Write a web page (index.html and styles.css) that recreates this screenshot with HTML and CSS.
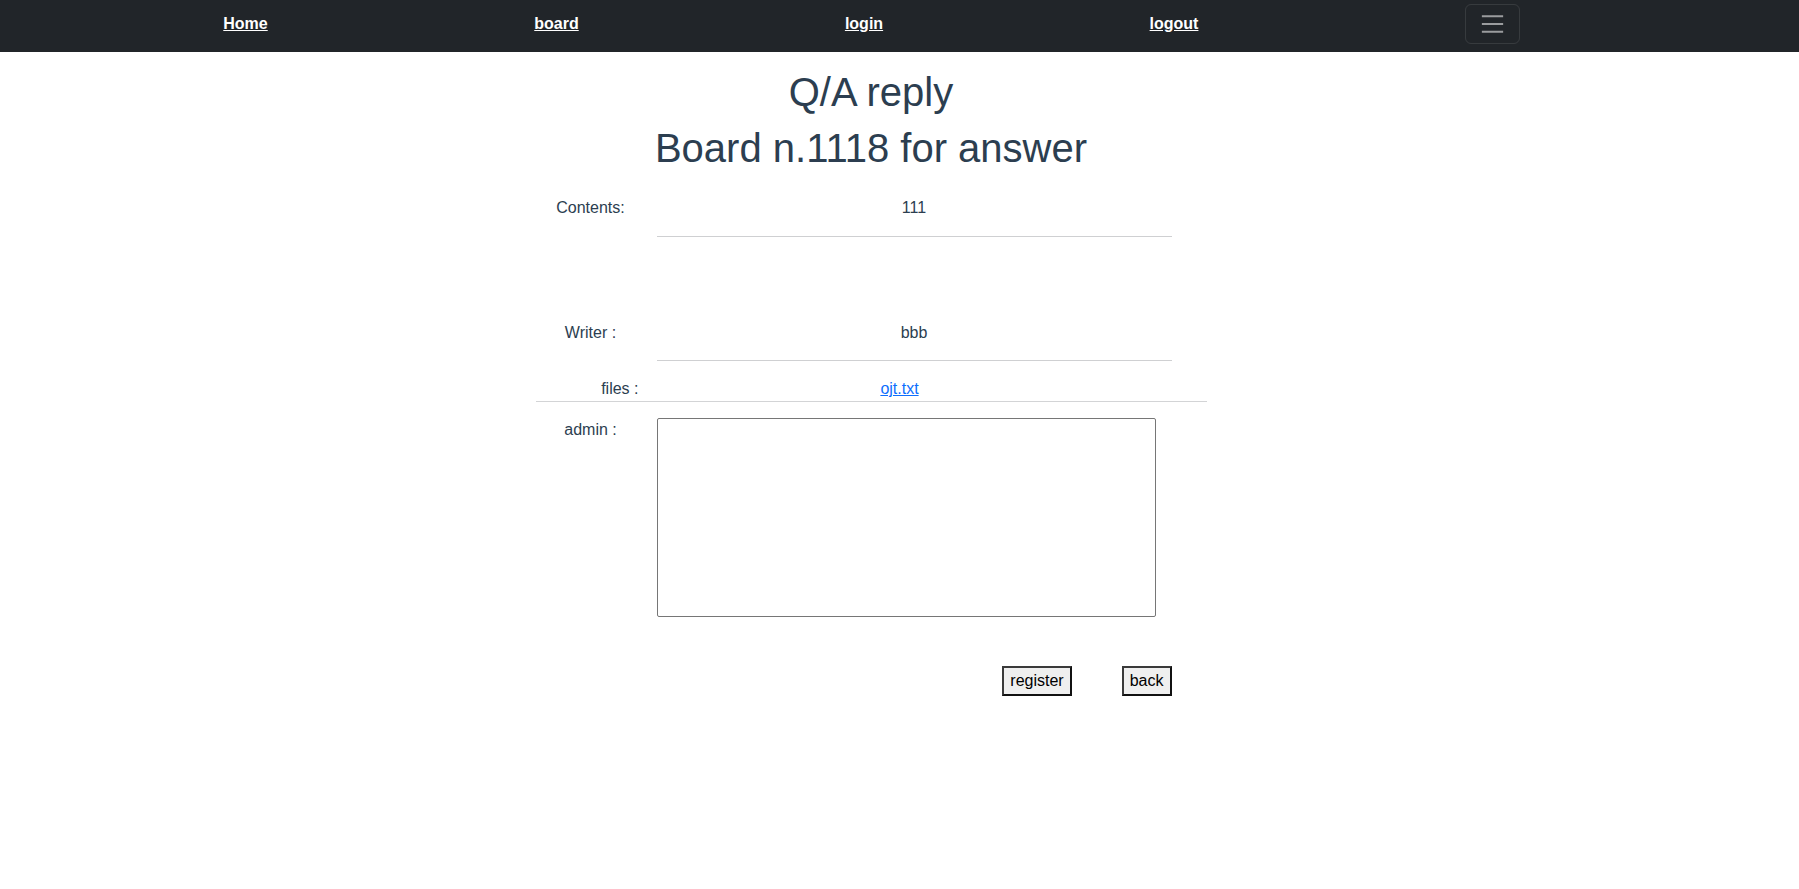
FILE: index.html
```html
<!DOCTYPE html>
<html lang="en">
<head>
<meta charset="utf-8">
<title>Q/A reply</title>
<link rel="stylesheet" href="styles.css">
</head>
<body>
<nav class="navbar">
  <ul class="nav-list">
    <li class="nav-item"><a href="#" class="nav-link">Home</a></li>
    <li class="nav-item"><a href="#" class="nav-link">board</a></li>
    <li class="nav-item"><a href="#" class="nav-link">login</a></li>
    <li class="nav-item"><a href="#" class="nav-link">logout</a></li>
    <li class="nav-item">
      <button class="toggler" type="button" aria-label="Toggle navigation">
        <svg width="30" height="30" viewBox="0 0 30 30" aria-hidden="true">
          <path d="M4 7h22M4 15h22M4 23h22" stroke="rgba(255,255,255,0.55)" stroke-width="2" stroke-linecap="butt" fill="none"/>
        </svg>
      </button>
    </li>
  </ul>
</nav>
<div class="app">
  <h1 class="title title-first">Q/A reply</h1>
  <h1 class="title">Board n.1118 for answer</h1>
  <section class="board">
    <div class="row row-contents">
      <div class="label">Contents:</div>
      <div class="value">
        <p class="text">111</p>
        <hr class="rule">
      </div>
    </div>
    <div class="row row-writer">
      <div class="label">Writer :</div>
      <div class="value">
        <p class="text">bbb</p>
        <hr class="rule">
      </div>
    </div>
    <div class="row row-files">
      <div class="label label-files">files :</div>
      <div class="value value-files"><a href="#" class="file-link">ojt.txt</a></div>
    </div>
    <div class="row row-admin">
      <div class="label label-admin">admin :</div>
      <div class="value value-admin"><textarea class="answer"></textarea></div>
    </div>
    <div class="actions">
      <button class="btn" type="button">register</button>
      <button class="btn" type="button">back</button>
    </div>
  </section>
</div>
</body>
</html>
```

FILE: styles.css
```css
* { box-sizing: border-box; }

html, body {
  margin: 0;
  padding: 0;
  background: #fff;
}

body {
  font-family: "Liberation Sans", Arial, Helvetica, sans-serif;
  font-size: 16px;
  line-height: 1.5;
  color: #2c3e50;
}

.navbar {
  background: #212529;
  height: 52px;
  padding: 4px 0 8px;
}

.nav-list {
  list-style: none;
  margin: 0;
  padding: 0 0 0 91px;
  height: 40px;
  display: grid;
  grid-template-columns: 309px 313px 302px 318px 318px;
  align-items: center;
  justify-items: center;
}

.nav-link {
  color: #fff;
  font-weight: 700;
  text-decoration: underline;
  font-size: 16px;
  line-height: 20px;
}

.toggler {
  width: 55px;
  height: 40px;
  padding: 4px 12px;
  background: transparent;
  border: 1px solid rgba(255, 255, 255, 0.1);
  border-radius: 6px;
  display: flex;
  align-items: center;
  justify-content: center;
}

.toggler svg { display: block; }

.app {
  padding-right: 57px;
  text-align: center;
}

.title {
  font-size: 40px;
  font-weight: 400;
  line-height: 1.2;
  margin: 0 0 8px;
  color: #2c3e50;
}

.title-first { margin-top: 16px; }

.board {
  width: 671px;
  margin: 0 auto;
}

.row {
  display: grid;
  grid-template-columns: 121px 515px 1fr;
}

.label {
  padding-right: 11px;
  text-align: center;
}

.text { margin: 0; }

.rule {
  margin: 16px 0 0;
  border: 0;
  border-top: 1px solid #cfd0d2;
  height: 0;
}

.row-contents { padding: 16px 0 84px; }

.row-writer { padding: 0; }
.row-writer .rule { margin-top: 15px; }

.row-files {
  padding: 16px 0 0;
  border-bottom: 1px solid #d3d4d6;
}

.label-files {
  text-align: right;
  padding-right: 18px;
}

.value-files { padding-right: 29px; }

.file-link {
  color: #0d6efd;
  text-decoration: underline;
}

.row-admin { padding-top: 16px; }

.label-admin {
  text-align: center;
  margin-top: 0;
}

.value-admin { text-align: left; }

.answer {
  display: block;
  width: 499px;
  height: 199px;
  border: 1px solid #767676;
  border-radius: 2px;
  resize: none;
  font: inherit;
  padding: 2px;
  margin: 0;
}

.actions {
  display: flex;
  justify-content: flex-end;
  gap: 50px;
  width: 636px;
  padding-top: 49px;
}

.btn {
  font-family: "Liberation Sans", Arial, sans-serif;
  font-size: 16px;
  line-height: 18px;
  padding: 4px 6px;
  color: #000;
  background: #efefef;
  border: 2px solid #3a3a3a;
  border-right-color: #111;
  border-bottom-color: #111;
  border-radius: 0;
  margin: 0;
}
```
